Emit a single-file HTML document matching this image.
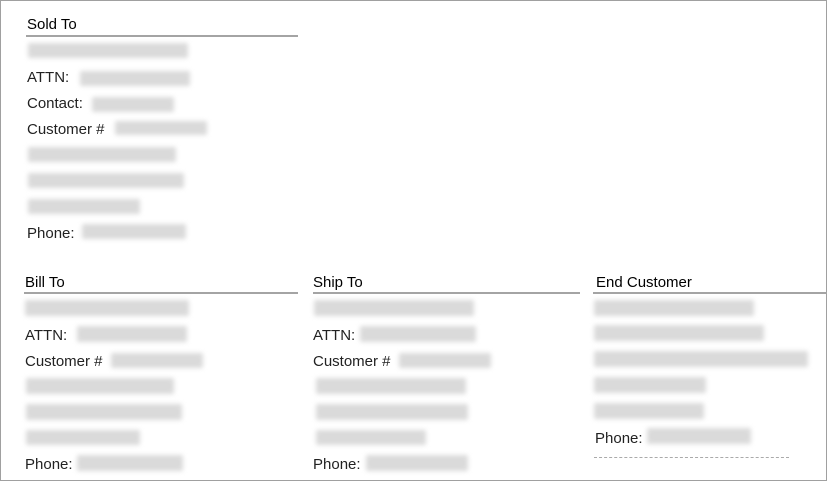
<!DOCTYPE html>
<html><head><meta charset="utf-8"><style>
html,body{margin:0;padding:0;background:#fff}
body{width:827px;height:481px;position:relative;overflow:hidden;font-family:"Liberation Sans",sans-serif;font-size:15px;color:#222}
.frame{position:absolute;left:0;top:0;width:825px;height:479px;border:1px solid #a0a0a0}
.t{position:absolute;line-height:18px;white-space:nowrap;padding-top:2px}
.h{position:absolute;line-height:18px;font-size:15px;color:#000;padding-top:1px}
.ln{position:absolute;height:2px;background:#a4a4a4}
.b{position:absolute;background:#dadada;filter:blur(2.5px);border-radius:2px}
.dash{position:absolute;height:0;border-top:1px dashed #aaa}
</style></head><body>
<div class="frame"></div>

<div class="h" style="left:27px;top:15px">Sold To</div>
<div class="ln" style="left:26px;top:35px;width:272px"></div>
<div class="b" style="left:28px;top:43px;width:160px;height:15px"></div>
<div class="t" style="left:27px;top:67px">ATTN: </div>
<div class="b" style="left:80px;top:71px;width:110px;height:15px"></div>
<div class="t" style="left:27px;top:93px">Contact:</div>
<div class="b" style="left:92px;top:97px;width:82px;height:15px"></div>
<div class="t" style="left:27px;top:119px">Customer #</div>
<div class="b" style="left:115px;top:121px;width:92px;height:14px"></div>
<div class="b" style="left:28px;top:147px;width:148px;height:15px"></div>
<div class="b" style="left:28px;top:173px;width:156px;height:15px"></div>
<div class="b" style="left:28px;top:199px;width:112px;height:15px"></div>
<div class="t" style="left:27px;top:223px">Phone:</div>
<div class="b" style="left:82px;top:224px;width:104px;height:15px"></div>

<div class="h" style="left:25px;top:273px">Bill To</div>
<div class="ln" style="left:24px;top:292px;width:274px"></div>
<div class="b" style="left:25px;top:300px;width:164px;height:16px"></div>
<div class="t" style="left:25px;top:325px">ATTN:</div>
<div class="b" style="left:77px;top:326px;width:110px;height:16px"></div>
<div class="t" style="left:25px;top:351px">Customer #</div>
<div class="b" style="left:111px;top:353px;width:92px;height:15px"></div>
<div class="b" style="left:26px;top:378px;width:148px;height:16px"></div>
<div class="b" style="left:26px;top:404px;width:156px;height:16px"></div>
<div class="b" style="left:26px;top:430px;width:114px;height:15px"></div>
<div class="t" style="left:25px;top:454px">Phone:</div>
<div class="b" style="left:77px;top:455px;width:106px;height:16px"></div>

<div class="h" style="left:313px;top:273px">Ship To</div>
<div class="ln" style="left:313px;top:292px;width:267px"></div>
<div class="b" style="left:314px;top:300px;width:160px;height:16px"></div>
<div class="t" style="left:313px;top:325px">ATTN:</div>
<div class="b" style="left:360px;top:326px;width:116px;height:16px"></div>
<div class="t" style="left:313px;top:351px">Customer #</div>
<div class="b" style="left:399px;top:353px;width:92px;height:15px"></div>
<div class="b" style="left:316px;top:378px;width:150px;height:16px"></div>
<div class="b" style="left:316px;top:404px;width:152px;height:16px"></div>
<div class="b" style="left:316px;top:430px;width:110px;height:15px"></div>
<div class="t" style="left:313px;top:454px">Phone:</div>
<div class="b" style="left:366px;top:455px;width:102px;height:16px"></div>

<div class="h" style="left:596px;top:273px">End Customer</div>
<div class="ln" style="left:593px;top:292px;width:234px"></div>
<div class="b" style="left:594px;top:300px;width:160px;height:16px"></div>
<div class="b" style="left:594px;top:325px;width:170px;height:16px"></div>
<div class="b" style="left:594px;top:351px;width:214px;height:16px"></div>
<div class="b" style="left:594px;top:377px;width:112px;height:16px"></div>
<div class="b" style="left:594px;top:403px;width:110px;height:16px"></div>
<div class="t" style="left:595px;top:428px">Phone:</div>
<div class="b" style="left:647px;top:428px;width:104px;height:16px"></div>
<div class="dash" style="left:594px;top:457px;width:195px"></div>
</body></html>
